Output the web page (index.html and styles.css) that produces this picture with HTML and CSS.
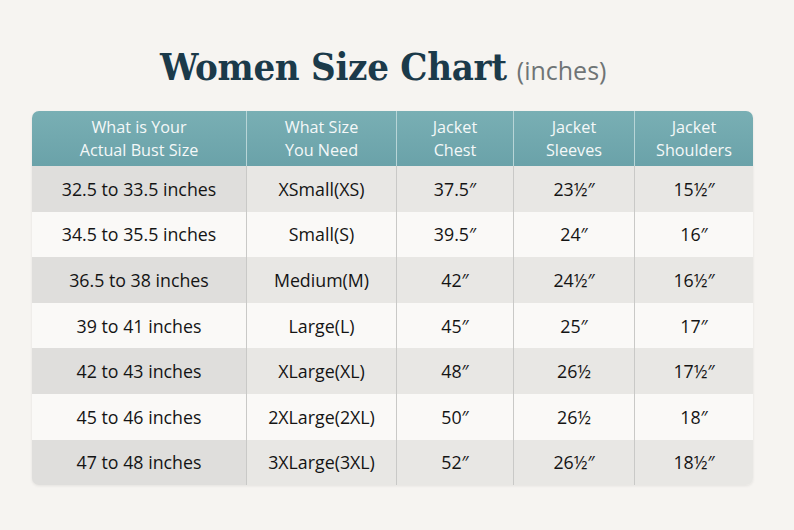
FILE: index.html
```html
<!DOCTYPE html>
<html>
<head>
<meta charset="utf-8">
<link rel="stylesheet" href="styles.css">
</head>
<body>
<div class="page">
  <h1 class="title"><span class="title-main">Women Size Chart</span> <span class="title-sub">(inches)</span></h1>
  <div class="chart">
    <div class="row head">
      <div class="cell">What is Your<br>Actual Bust Size</div>
      <div class="cell">What Size<br>You Need</div>
      <div class="cell">Jacket<br>Chest</div>
      <div class="cell">Jacket<br>Sleeves</div>
      <div class="cell">Jacket<br>Shoulders</div>
    </div>
    <div class="row shade">
      <div class="cell">32.5 to 33.5 inches</div><div class="cell">XSmall(XS)</div><div class="cell">37.5″</div><div class="cell">23½″</div><div class="cell">15½″</div>
    </div>
    <div class="row">
      <div class="cell">34.5 to 35.5 inches</div><div class="cell">Small(S)</div><div class="cell">39.5″</div><div class="cell">24″</div><div class="cell">16″</div>
    </div>
    <div class="row shade">
      <div class="cell">36.5 to 38 inches</div><div class="cell">Medium(M)</div><div class="cell">42″</div><div class="cell">24½″</div><div class="cell">16½″</div>
    </div>
    <div class="row">
      <div class="cell">39 to 41 inches</div><div class="cell">Large(L)</div><div class="cell">45″</div><div class="cell">25″</div><div class="cell">17″</div>
    </div>
    <div class="row shade">
      <div class="cell">42 to 43 inches</div><div class="cell">XLarge(XL)</div><div class="cell">48″</div><div class="cell">26½</div><div class="cell">17½″</div>
    </div>
    <div class="row">
      <div class="cell">45 to 46 inches</div><div class="cell">2XLarge(2XL)</div><div class="cell">50″</div><div class="cell">26½</div><div class="cell">18″</div>
    </div>
    <div class="row shade">
      <div class="cell">47 to 48 inches</div><div class="cell">3XLarge(3XL)</div><div class="cell">52″</div><div class="cell">26½″</div><div class="cell">18½″</div>
    </div>
  </div>
</div>
</body>
</html>
```

FILE: styles.css
```css
html, body {
  margin: 0;
  padding: 0;
  background: #f6f4f1;
}
.page {
  width: 794px;
  height: 530px;
  padding-top: 42px;
  box-sizing: border-box;
}
.title {
  margin: 0 0 0 160px;
  height: 69px;
  line-height: 50px;
  font-weight: normal;
  white-space: nowrap;
}
.title-main {
  font-family: "DejaVu Serif", serif;
  font-stretch: condensed;
  font-weight: bold;
  font-size: 38px;
  color: #1b3a4a;
  letter-spacing: -0.3px;
}
.title-sub {
  font-family: "Open Sans", sans-serif;
  font-size: 25px;
  color: #6f7476;
  margin-left: 2px;
}
.chart {
  margin-left: 32px;
  width: 721px;
  border-radius: 7px;
  overflow: hidden;
  box-shadow: 0 1px 3px rgba(0,0,0,0.08);
  font-family: "Open Sans", sans-serif;
}
.row {
  display: grid;
  grid-template-columns: 214px 150px 117px 121px 119px;
  height: 45.6px;
  background: #faf9f7;
}
.row.shade {
  background: #e8e7e4;
}
.row.shade .cell:first-child {
  background: #dfdedc;
}
.cell {
  display: flex;
  align-items: center;
  justify-content: center;
  text-align: center;
  font-size: 17.8px;
  color: #141414;
  border-left: 1.5px solid #c9c9c7;
}
.cell:first-child {
  border-left: none;
}
.row.head {
  height: 55px;
  background: linear-gradient(#79afb4, #6aa2a9);
}
.row.head .cell {
  font-size: 16.2px;
  line-height: 22.5px;
  color: #f4f8f8;
  border-left: 1.5px solid #b8d5d7;
}
.row.head .cell:first-child {
  border-left: none;
}
```
